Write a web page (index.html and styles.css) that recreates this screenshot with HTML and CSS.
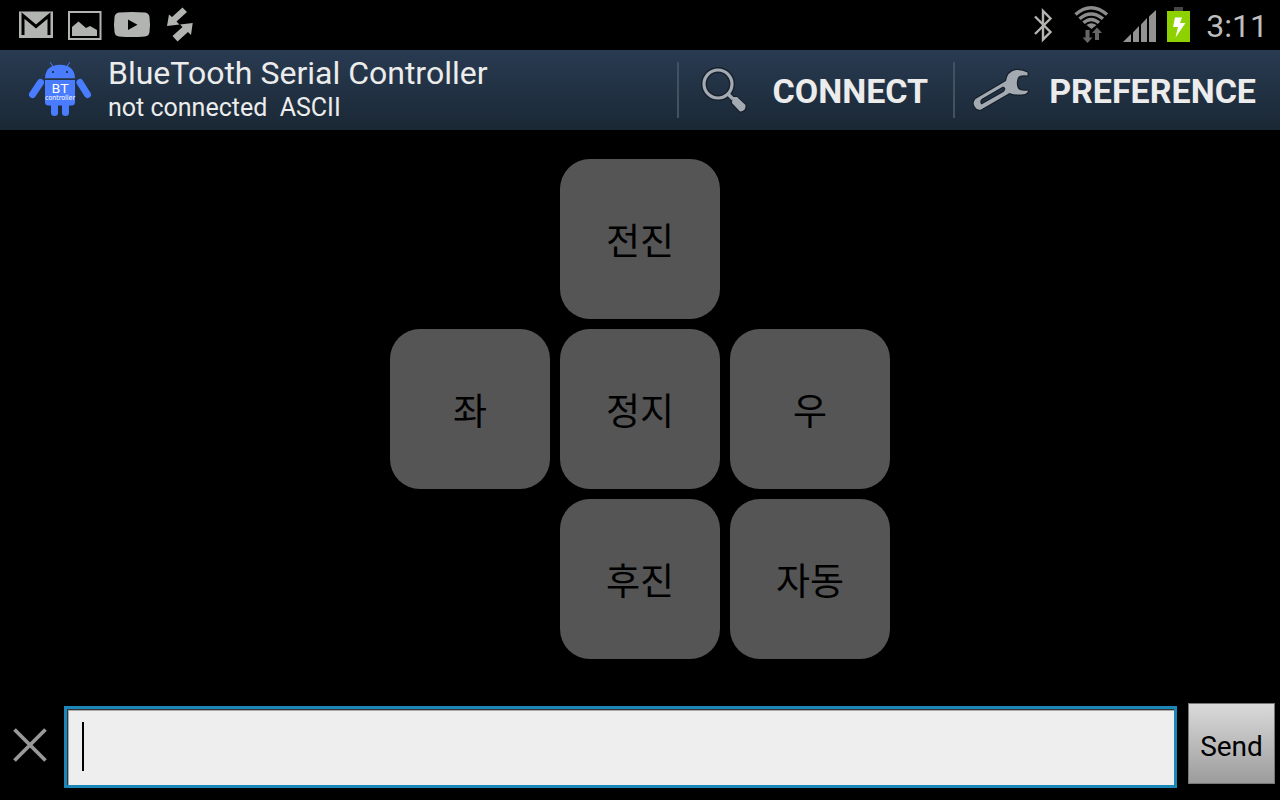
FILE: index.html
```html
<!DOCTYPE html>
<html lang="ko">
<head>
<meta charset="utf-8">
<meta name="viewport" content="width=device-width, initial-scale=1">
<title>BlueTooth Serial Controller</title>
<link rel="stylesheet" href="styles.css">
</head>
<body>
<div class="status-bar">
  <div class="status-group">
    <svg class="status-icon" viewBox="0 0 36 36" aria-hidden="true">
      <rect x="1" y="4.500" width="34" height="26.500" fill="#b2b4b1"/>
      <path d="M5 28V8.500L18 19.500 31 8.500V28" fill="none" stroke="#000" stroke-width="3"/>
    </svg>
    <svg class="status-icon" viewBox="0 0 36 36" aria-hidden="true">
      <rect x="3" y="5" width="31.500" height="27" fill="none" stroke="#b2b4b1" stroke-width="2"/>
      <path d="M6 29V20L12.500 14.500 20 21 24 19 31 23V29Z" fill="#b2b4b1"/>
    </svg>
    <svg class="status-icon" viewBox="0 0 36 36" aria-hidden="true">
      <path d="M5 5.500Q18 4.500 31 5.500 35 6 35.500 10 36.500 17.500 35.500 25 35 29 31 29.500 18 30.500 5 29.500 1 29 .5 25-.5 17.500.5 10 1 6 5 5.500Z" fill="#b2b4b1"/>
      <path d="M14 12.500V23L23.500 17.700Z" fill="#000"/>
    </svg>
    <svg class="status-icon" viewBox="0 0 36 36" aria-hidden="true">
      <path d="M20.500.5 25 5 14.500 14.500 17.500 17.500 5 19 7 7.500 10 10Z" fill="#b2b4b1"/>
      <path d="M30.700 16 29 28 26 25 15.500 34.500 10.500 29 20.500 20 18 17.500Z" fill="#b2b4b1"/>
    </svg>
  </div>
  <div class="status-group">
    <svg class="status-icon" viewBox="0 0 36 36" aria-hidden="true">
      <path d="M12 9.500 27.500 25 20 32.500V4L27.500 11.500 12 27" fill="none" stroke="#b2b4b1" stroke-width="2.400"/>
    </svg>
    <svg class="status-icon" viewBox="0 0 36 36" aria-hidden="true">
      <g fill="none" stroke="#8c8c8c" stroke-width="3.400">
        <path d="M4.500 7.500Q20 -6 36 7.500"/>
        <path d="M8.500 11.800Q20 2 32 11.800"/>
        <path d="M12.500 15.800Q20 9 28 15.800"/>
      </g>
      <path d="M15.500 18Q20.300 14.500 25.500 18L20.500 22Z" fill="#8c8c8c"/>
      <path d="M14.500 23H18.500V30.500H21.500L16.500 36 11.500 30.500H14.500Z M24 33V26H21L26 20.500 31 26H28V33Z" fill="#666"/>
    </svg>
    <svg class="status-icon" viewBox="0 0 36 36" aria-hidden="true">
      <path d="M4 35 12 27V35Z M14 25.500 20 19V35H14Z M22 17.500 28 11V35H22Z M30 9.500 37 3V35H30Z" fill="#929292"/>
    </svg>
    <svg class="battery-icon" viewBox="0 0 24 36" aria-hidden="true">
      <path d="M7 0H16V5H7Z" fill="#454545"/>
      <path d="M0 4H23V35H0Z" fill="#8dd100"/>
      <path d="M8 10.500H15L13 16H18.500L8.500 30.500 11 20H6Z" fill="#fff"/>
    </svg>
    <time class="clock">3:11</time>
  </div>
</div>

<header class="app-bar">
  <svg class="app-logo" viewBox="0 0 64 60" role="img" aria-label="BT controller">
    <g fill="#4a7cff">
      <path d="M17 18Q17.500 5 32 4.700 46.500 5 47 18.300H17Z"/>
      <path d="M17 20H47V42Q47 45.500 43.500 45.500H39.500H20.500Q17 45.500 17 42Z"/>
      <path d="M23 43H30V53Q30 56 26.500 56T23 53Z M34 43H41V53Q41 56 37.500 56T34 53Z"/>
    </g>
    <g stroke="#4a7cff" stroke-linecap="round">
      <path d="M12.500 22.500 4.500 34.500M52 22.500 59.500 34.500" stroke-width="7"/>
      <path d="M22.500 2.500 25 6.500M41.500 2.500 39 6.500" stroke-width="1"/>
    </g>
    <path d="M24 11H26V13H24ZM38 11H40V13H38Z" fill="#1d3556"/>
    <text class="logo-name" x="32" y="33">BT</text>
    <text class="logo-caption" x="32" y="40">controller</text>
  </svg>
  <div class="titles">
    <h1 class="title">BlueTooth Serial Controller</h1>
    <p class="subtitle">not connected&nbsp; ASCII</p>
  </div>
  <nav class="actions">
    <button class="action" type="button">
      <svg class="search-icon" viewBox="0 0 48 48" aria-hidden="true">
        <g stroke="#17202b" stroke-linecap="round" fill="none">
          <circle cx="17" cy="18" r="14" stroke-width="6"/>
          <path d="M27.500 28.500 32 33" stroke-width="6"/>
          <path d="M32 31 36 31.500 44.500 39Q45 45 39 45.500L31 37Z" stroke-width="2.500"/>
        </g>
        <circle cx="17" cy="18" r="14" fill="none" stroke="#a4aab2" stroke-width="3.200"/>
        <path d="M27.500 28.500 32 33" stroke="#a4aab2" stroke-width="3.500"/>
        <path d="M31.500 31 36 31 44.500 39Q45 45 39 45.500L31 37Z" fill="#a4aab2"/>
      </svg>
      <span>CONNECT</span>
    </button>
    <button class="action" type="button">
      <svg class="wrench-icon" viewBox="0 0 60 48" aria-hidden="true">
        <path d="M56.500 6.500Q51 3.500 45 4 36.500 5.500 35 15L4.500 33Q1 37 4 41 6 44.500 10 43.500L38.500 27Q44 29.500 54 28 57 26.500 57 24.500 49.500 25.500 47 22.500 44.500 17 47 11.500 49 8.500 56.500 9.500ZM32 20.500 10.500 33Q8 36 10.500 38.500L32.500 26Q36.500 22 32 20.500Z" fill="#a4aab2" fill-rule="evenodd" stroke="#17202b" stroke-width="2.500" stroke-linejoin="round" paint-order="stroke"/>
      </svg>
      <span>PREFERENCE</span>
    </button>
  </nav>
</header>

<main class="pad-area">
  <div class="pad">
    <button class="key key-forward" type="button">전진</button>
    <button class="key key-left" type="button">좌</button>
    <button class="key key-stop" type="button">정지</button>
    <button class="key key-right" type="button">우</button>
    <button class="key key-back" type="button">후진</button>
    <button class="key key-automatic" type="button">자동</button>
  </div>
</main>

<form class="send-bar">
  <button class="clear" type="button" aria-label="Clear">
    <svg class="clear-icon" viewBox="0 0 36 36" aria-hidden="true">
      <path d="M2.500 1.500 33.500 32.500M33.500 1.500 2.500 32.500" stroke="#999" stroke-width="3.800"/>
    </svg>
  </button>
  <div class="field">
    <input class="message" type="text" aria-label="Message">
    <span class="caret"></span>
  </div>
  <button class="send" type="button">Send</button>
</form>
</body>
</html>
```

FILE: styles.css
```css
* {
  box-sizing: border-box;
}

body {
  margin: 0;
  min-height: 100vh;
  display: flex;
  flex-direction: column;
  background: #000;
  color: #ececec;
  font-family: Roboto, "Noto Sans CJK KR", sans-serif;
}

button {
  margin: 0;
  padding: 0;
  border: 0;
  background: none;
  color: inherit;
  font: inherit;
  cursor: pointer;
}

svg {
  display: block;
  flex: none;
  overflow: visible;
}

.status-bar {
  display: flex;
  justify-content: space-between;
  align-items: center;
  height: 50px;
  padding: 0 12px 0 18px;
}

.status-group {
  display: flex;
  align-items: center;
  gap: 12px;
}

.status-icon {
  width: 36px;
  height: 36px;
}

.battery-icon {
  width: 24px;
  height: 36px;
}

.clock {
  padding: 2px 0 0 3px;
  color: #bebebe;
  font-size: 32px;
  line-height: 36px;
}

.app-bar {
  display: flex;
  align-items: center;
  height: 80px;
  padding-left: 28px;
  background: linear-gradient(#293b52, #1a2835);
}

.app-logo {
  width: 64px;
  height: 60px;
  margin-right: 16px;
}

.logo-name,
.logo-caption {
  fill: #fff;
  font-family: "DejaVu Sans", sans-serif;
  text-anchor: middle;
}

.logo-name {
  font-size: 13px;
}

.logo-caption {
  font-family: "DejaVu Sans Condensed", "DejaVu Sans", sans-serif;
  font-size: 7px;
}

.titles {
  flex: 1;
  min-width: 0;
  padding-bottom: 2px;
  white-space: nowrap;
}

.title,
.subtitle {
  margin: 0;
  font-weight: 400;
}

.title {
  font-size: 32px;
  line-height: 38px;
}

.subtitle {
  font-size: 25px;
  line-height: 32px;
}

.actions {
  display: flex;
}

.action {
  display: flex;
  align-items: center;
  gap: 24px;
  height: 56px;
  padding: 0 25px 0 22px;
  border-left: 2px solid #435261;
  font-size: 34px;
  font-weight: 700;
}

.action span {
  padding-top: 2px;
}

.action:last-child {
  gap: 18px;
  padding: 0 24px 0 16px;
}

.search-icon {
  width: 48px;
  height: 48px;
}

.wrench-icon {
  width: 60px;
  height: 48px;
}

.pad-area {
  flex: 1;
  display: flex;
  align-items: center;
  justify-content: center;
}

.pad {
  display: grid;
  grid-template: repeat(3, 160px) / repeat(3, 160px);
  grid-template-areas:
    ". forward ."
    "left stop right"
    ". back automatic";
  gap: 10px;
}

.key {
  border-radius: 30px;
  background: #555;
  color: #000;
  font-family: "Noto Sans CJK KR", sans-serif;
  font-size: 37px;
}

.key-forward { grid-area: forward; }
.key-left { grid-area: left; }
.key-stop { grid-area: stop; }
.key-right { grid-area: right; }
.key-back { grid-area: back; }
.key-automatic { grid-area: automatic; }

.send-bar {
  display: flex;
  align-items: flex-start;
  padding: 15px 5px 12px 0;
}

.clear {
  display: flex;
  justify-content: center;
  align-self: center;
  width: 60px;
}

.clear-icon {
  width: 36px;
  height: 36px;
}

.field {
  position: relative;
  flex: 1;
  margin: 3px 11px 0 4px;
}

.message {
  display: block;
  width: 100%;
  height: 82px;
  padding: 0 14px;
  border: 3px solid #1b86b8;
  border-radius: 0;
  background: #eee;
  box-shadow: inset 1px 1px 0 #333, inset 2px 2px 0 #aaa;
  color: #000;
  font-family: inherit;
  font-size: 36px;
  outline: 0;
}

.caret {
  position: absolute;
  top: 16px;
  left: 18px;
  width: 2px;
  height: 49px;
  background: #000;
}

.send {
  width: 87px;
  height: 81px;
  padding-top: 6px;
  border: 1px solid #777;
  background: linear-gradient(#dadada, #9c9c9c);
  color: #000;
  font-size: 28px;
}
```
